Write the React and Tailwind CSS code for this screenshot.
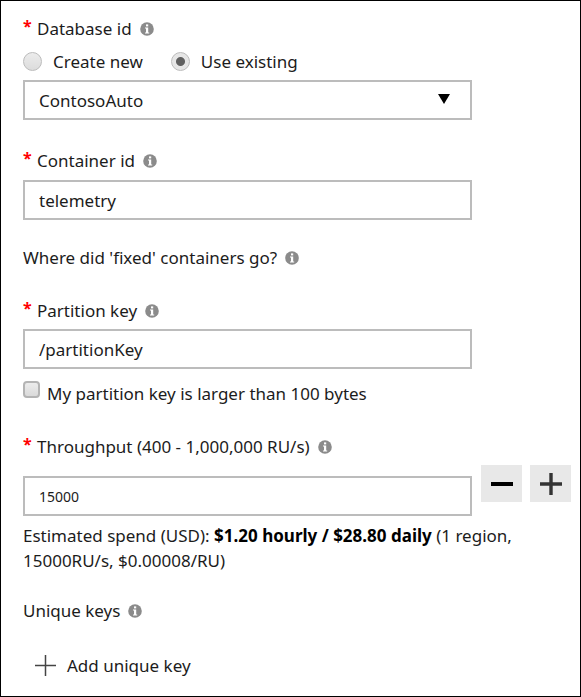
import { useState } from "react";

const FIELD =
  "block h-10 w-full rounded-none border-2 border-[#bcbcbc] bg-white px-[14px] text-[#1c1c1c] outline-none focus:border-[#7a7a7a]";

function InfoIcon() {
  return (
    <svg width="14" height="14" viewBox="0 0 14 14" className="shrink-0" role="img" aria-label="More information">
      <circle cx="7" cy="7" r="6.8" fill="#8b8b8b" />
      <rect x="6" y="2.4" width="2.2" height="2" fill="#fff" />
      <path d="M5 5.4h3.2v5h1v1.1H5v-1.1h1V6.5H5z" fill="#fff" />
    </svg>
  );
}

function Label({ htmlFor, required, children }) {
  return (
    <div className="flex items-center gap-2">
      <label htmlFor={htmlFor} className="flex items-start gap-[5px]">
        {required && (
          <span className="w-[9px] text-base leading-5 font-bold text-[#f00]">*</span>
        )}
        {children}
      </label>
      <InfoIcon />
    </div>
  );
}

function Radio({ value, current, onChange, children }) {
  return (
    <label className="flex items-center gap-[11px]">
      <input
        type="radio"
        name="database-mode"
        value={value}
        checked={current === value}
        onChange={() => onChange(value)}
        className="size-[19px] appearance-none rounded-full border border-[#bcbcbc] bg-linear-to-b from-[#ececec] to-[#dcdcdc] checked:bg-[radial-gradient(circle,#606060_4px,#e6e6e6_5px)]"
      />
      {children}
    </label>
  );
}

export default function App() {
  const [mode, setMode] = useState("existing");
  const [throughput, setThroughput] = useState(15000);

  return (
    <main className="min-h-screen border border-black bg-white pt-[15px] pr-[9px] pb-4 pl-[22px] font-['Noto_Sans','Open_Sans',sans-serif] text-[17px] leading-[25px] text-[#1c1c1c]">
      <section className="pr-[99px]">
        <Label htmlFor="database" required>Database id</Label>
        <div className="mt-2 flex gap-7">
          <Radio value="new" current={mode} onChange={setMode}>Create new</Radio>
          <Radio value="existing" current={mode} onChange={setMode}>Use existing</Radio>
        </div>
        <div className="relative mt-[6px]">
          <select id="database" defaultValue="ContosoAuto" className={`${FIELD} appearance-none`}>
            <option>ContosoAuto</option>
          </select>
          <svg width="12" height="10" viewBox="0 0 12 10" className="pointer-events-none absolute top-[14px] right-[22px]" aria-hidden="true">
            <path d="M0 0h12L6 10z" fill="#000" />
          </svg>
        </div>
      </section>

      <section className="mt-7 pr-[99px]">
        <Label htmlFor="container" required>Container id</Label>
        <input id="container" type="text" defaultValue="telemetry" className={`${FIELD} mt-[7px]`} />
      </section>

      <div className="mt-[25px] flex items-center gap-2">
        <span>Where did 'fixed' containers go?</span>
        <InfoIcon />
      </div>

      <section className="mt-7 pr-[99px]">
        <Label htmlFor="partition" required>Partition key</Label>
        <input id="partition" type="text" defaultValue="/partitionKey" className={`${FIELD} mt-[6px]`} />
        <label className="mt-3 flex items-start gap-[7px]">
          <input
            type="checkbox"
            className="size-[17px] appearance-none rounded-[4px] border-2 border-[#b4b4b4] bg-linear-to-b from-[#ececec] to-[#dadada] checked:bg-[#606060]"
          />
          My partition key is larger than 100 bytes
        </label>
      </section>

      <section className="mt-7">
        <Label htmlFor="throughput" required>Throughput (400 - 1,000,000 RU/s)</Label>
        <div className="mt-[6px] flex items-start gap-[9px]">
          <div className="min-w-0 flex-1 pt-[11px]">
            <input
              id="throughput"
              type="text"
              inputMode="numeric"
              value={throughput}
              onChange={(e) => setThroughput(Number(e.target.value) || 0)}
              className={`${FIELD} text-sm`}
            />
          </div>
          <div className="flex gap-2">
            <button
              type="button"
              aria-label="Decrease throughput"
              onClick={() => setThroughput(Math.max(400, throughput - 100))}
              className="flex h-[37px] w-[41px] items-center justify-center bg-[#e8e8e8]"
            >
              <svg width="22" height="22" viewBox="0 0 22 22" aria-hidden="true">
                <path d="M0 11h22" stroke="#000" strokeWidth="4" />
              </svg>
            </button>
            <button
              type="button"
              aria-label="Increase throughput"
              onClick={() => setThroughput(Math.min(1000000, throughput + 100))}
              className="flex h-[37px] w-[41px] items-center justify-center bg-[#e8e8e8]"
            >
              <svg width="22" height="22" viewBox="0 0 22 22" aria-hidden="true">
                <path d="M0 11h22M11 0v22" stroke="#333" strokeWidth="3.4" />
              </svg>
            </button>
          </div>
        </div>
        <p className="mt-[7px]">
          Estimated spend (USD): <strong className="font-bold text-black">$1.20 hourly / $28.80 daily</strong> (1 region, 15000RU/s, $0.00008/RU)
        </p>
      </section>

      <section className="mt-[25px]">
        <div className="flex items-center gap-2">
          <h2>Unique keys</h2>
          <InfoIcon />
        </div>
        <button type="button" className="mt-[30px] ml-3 flex items-center gap-[11px]">
          <svg width="21" height="21" viewBox="0 0 21 21" aria-hidden="true">
            <path d="M0 10.5h21M10.5 0v21" stroke="#444" strokeWidth="1.5" />
          </svg>
          Add unique key
        </button>
      </section>
    </main>
  );
}
